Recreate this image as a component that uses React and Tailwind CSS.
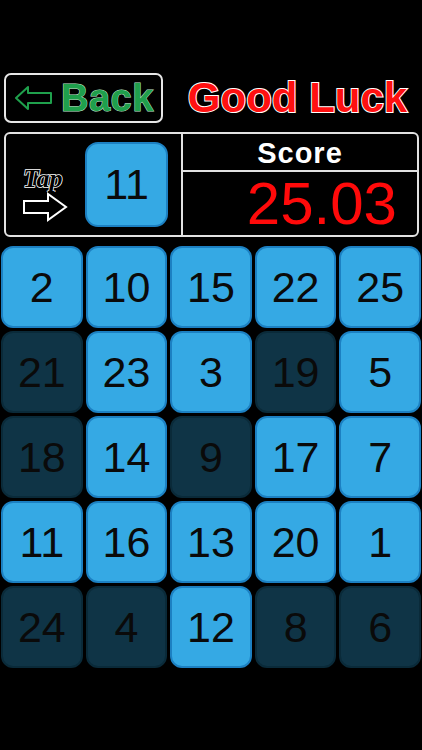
const rows = [
    [[2, 1], [10, 1], [15, 1], [22, 1], [25, 1]],
    [[21, 0], [23, 1], [3, 1], [19, 0], [5, 1]],
    [[18, 0], [14, 1], [9, 0], [17, 1], [7, 1]],
    [[11, 1], [16, 1], [13, 1], [20, 1], [1, 1]],
    [[24, 0], [4, 0], [12, 1], [8, 0], [6, 0]],
];

const Tile = ({ n, lit }) => (
    <div
        className={
            lit
                ? 'h-[82px] rounded-[12px] border-2 border-[#1c80c2] bg-[#35a9e4] flex items-center justify-center'
                : 'h-[82px] rounded-[12px] border-2 border-[#0a2a39] bg-[#0f3446] flex items-center justify-center'
        }
    >
        <span className="text-[43px] leading-none text-[#0a0a0a] [font-family:'Liberation_Sans',Arial,sans-serif]">
            {n}
        </span>
    </div>
);

const App = () => {
    return (
        <div className="w-[422px] h-[750px] bg-black pt-[73px] [font-family:'Liberation_Sans',Arial,sans-serif]">
            {/* top bar */}
            <div className="flex items-center">
                <div className="ml-[4px] w-[159px] h-[50px] border-2 border-[#e6e6e6] rounded-[7px] flex items-center pl-[9px]">
                    <svg width="38" height="26" viewBox="0 0 38 26" className="mr-[8px]">
                        <polygon
                            points="1,13 13,2 13,8 36,8 36,18 13,18 13,24"
                            fill="none"
                            stroke="#1fa04c"
                            strokeWidth="2"
                            strokeLinejoin="round"
                        />
                    </svg>
                    <span className="text-[38px] font-bold leading-none text-[#1fa04c] [-webkit-text-stroke:1px_#bfe8cc] [paint-order:stroke_fill] tracking-[0.5px]">
                        Back
                    </span>
                </div>
                <div className="flex-1 text-center pl-[10px]">
                    <span className="text-[42px] font-bold leading-none text-[#ff1010] [-webkit-text-stroke:2px_#ffffff] [paint-order:stroke_fill]">
                        Good Luck
                    </span>
                </div>
            </div>

            {/* score panel */}
            <div className="ml-[4px] mr-[3px] mt-[9px] h-[105px] border-2 border-[#e2e2e2] rounded-[6px] flex">
                <div className="w-[177px] border-r-2 border-[#e2e2e2] flex items-center pl-[14px]">
                    <div className="w-[56px] pt-[16px] flex flex-col items-start">
                        <svg width="56" height="28" viewBox="0 0 56 28">
                            <text
                                x="3"
                                y="23"
                                fontSize="26"
                                fontWeight="bold"
                                fontStyle="italic"
                                fontFamily="'Liberation Serif', serif"
                                fill="#000000"
                                stroke="#ffffff"
                                strokeWidth="1.6"
                                paintOrder="stroke"
                            >
                                Tap
                            </text>
                        </svg>
                        <svg width="48" height="30" viewBox="0 0 48 30">
                            <polygon
                                points="4,9 28,9 28,2 46,15 28,28 28,21 4,21"
                                fill="none"
                                stroke="#ffffff"
                                strokeWidth="2"
                                strokeLinejoin="miter"
                            />
                        </svg>
                    </div>
                    <div className="ml-[9px] w-[83px] h-[85px] rounded-[13px] border-2 border-[#1c80c2] bg-[#35a9e4] flex items-center justify-center">
                        <span className="text-[43px] leading-none text-[#0a0a0a]">11</span>
                    </div>
                </div>
                <div className="flex-1 flex flex-col">
                    <div className="h-[38px] border-b-2 border-[#e2e2e2] flex items-center justify-center pt-[2px]">
                        <span className="text-[29px] font-bold leading-none text-white tracking-[1px]">Score</span>
                    </div>
                    <div className="flex-1 flex items-center justify-end pr-[20px]">
                        <span className="text-[60px] leading-none text-[#ff0a0a]">25.03</span>
                    </div>
                </div>
            </div>

            {/* board */}
            <div className="mt-[9px] px-[1px] grid grid-cols-5 gap-[3px]">
                {rows.flat().map(([n, lit], i) => (
                    <Tile key={i} n={n} lit={lit} />
                ))}
            </div>
        </div>
    );
};

export default App;
